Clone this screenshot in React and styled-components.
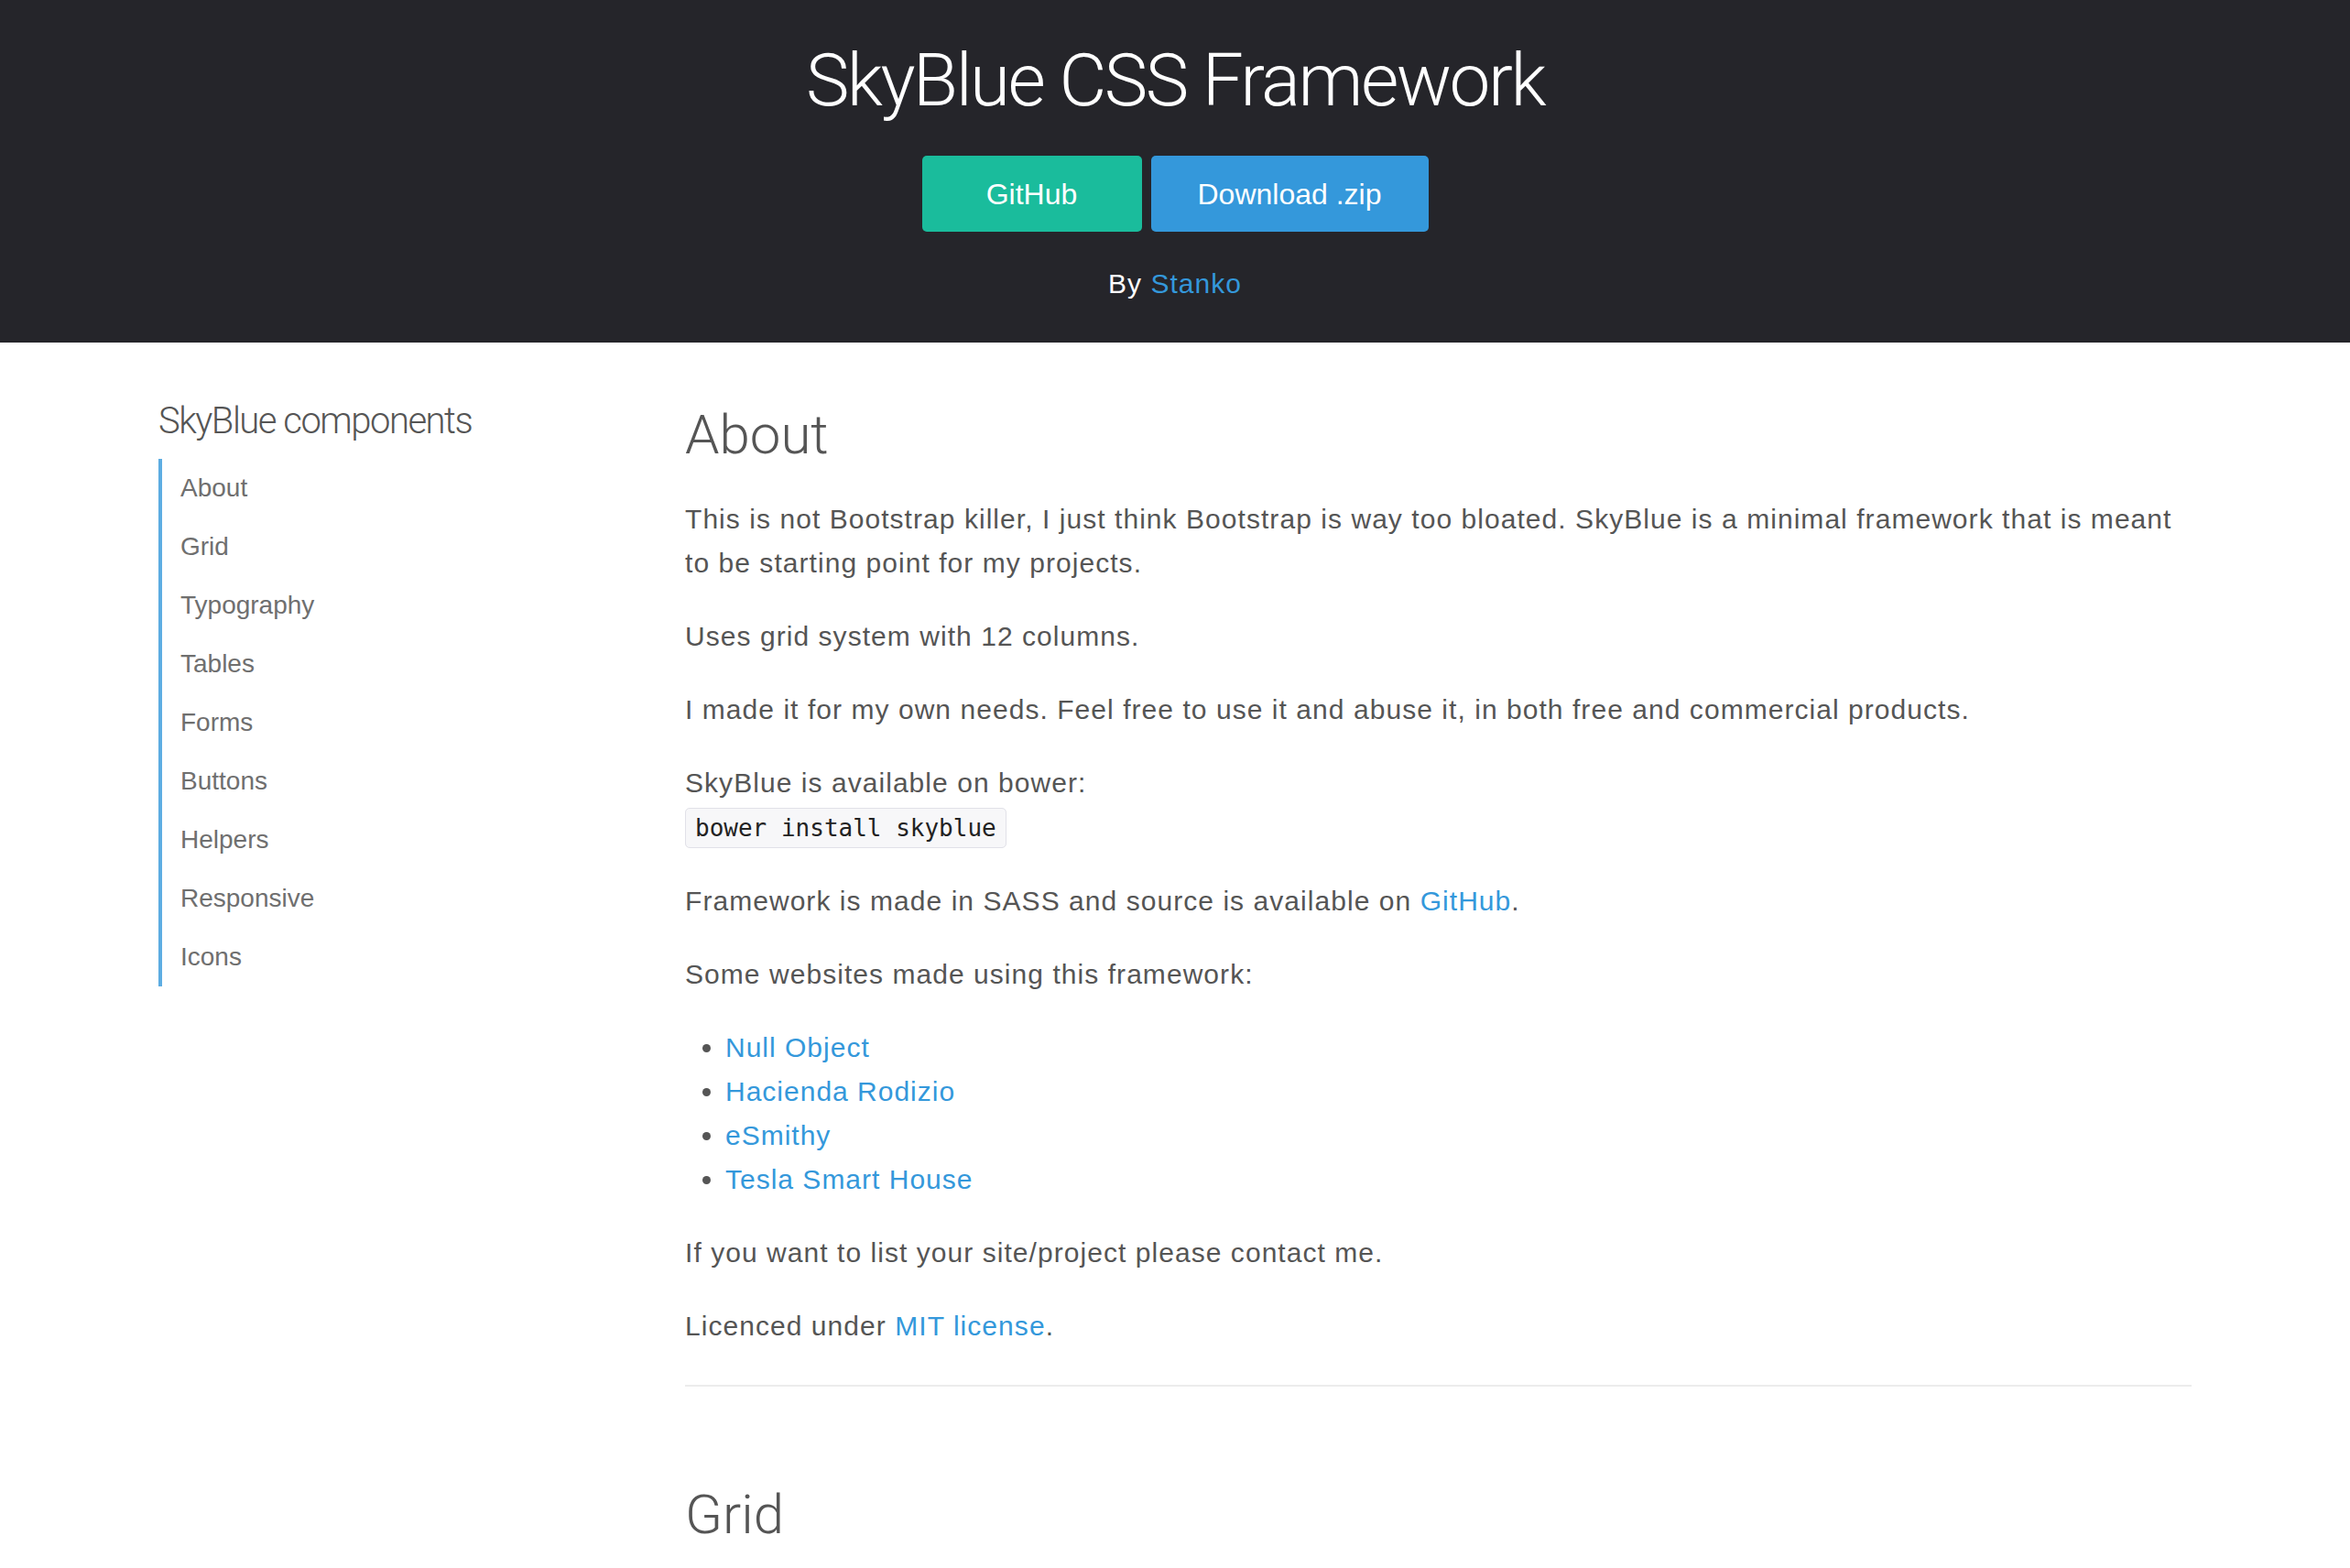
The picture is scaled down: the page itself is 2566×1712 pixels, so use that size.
import React from 'react';
import styled, { createGlobalStyle } from 'styled-components';

const GlobalStyle = createGlobalStyle`
	html, body {
		margin: 0;
		padding: 0;
		background: #fff;
	}
	body {
		font-family: 'Liberation Sans', Arial, sans-serif;
		font-size: 30px;
		line-height: 48px;
		color: #555;
	}
	a {
		color: #3498db;
		text-decoration: none;
	}
`;

const navItems = ['About', 'Grid', 'Typography', 'Tables', 'Forms', 'Buttons', 'Helpers', 'Responsive', 'Icons'];

const sites = ['Null Object', 'Hacienda Rodizio', 'eSmithy', 'Tesla Smart House'];

const Header = styled.header`
	background: #25252a;
	color: #fff;
	text-align: center;
	padding: 40px 0 40px;
`;

const Title = styled.h1`
	margin: 0;
	font-family: 'Roboto', 'Liberation Sans', sans-serif;
	font-weight: 300;
	font-size: 80px;
	line-height: 96px;
	letter-spacing: -2.5px;
`;

const ButtonRow = styled.div`
	display: flex;
	justify-content: center;
	gap: 10px;
	margin-top: 34px;
`;

const Button = styled.a`
	display: inline-flex;
	align-items: center;
	justify-content: center;
	height: 83px;
	min-width: 240px;
	box-sizing: border-box;
	padding: 0 51px;
	border-radius: 5px;
	font-size: 32px;
	color: #fff;
	background: ${(p) => (p.$variant === 'green' ? '#1abc9c' : '#3498db')};
`;

const Byline = styled.p`
	margin: 33px 0 0;
	font-size: 30px;
	letter-spacing: 1px;
`;

const Layout = styled.div`
	box-sizing: border-box;
	max-width: 2340px;
	margin: 0 auto;
	padding: 62px 60px 0;
	display: grid;
	grid-template-columns: 575px 1fr;
	align-items: start;
`;

const Sidebar = styled.aside``;

const SidebarTitle = styled.h3`
	margin: 0 0 17px;
	font-family: 'Roboto', 'Liberation Sans', sans-serif;
	font-weight: 300;
	font-size: 40px;
	line-height: 48px;
	letter-spacing: -1.5px;
	color: #555;
`;

const Nav = styled.ul`
	list-style: none;
	margin: 0;
	padding: 0 0 0 20px;
	border-left: 4px solid #5dade2;
`;

const NavLink = styled.a`
	display: block;
	font-size: 28px;
	line-height: 64px;
	color: #6f6f6f;
`;

const Main = styled.main``;

const SectionTitle = styled.h2`
	margin: 3px 0 32px;
	font-family: 'Roboto', 'Liberation Sans', sans-serif;
	font-weight: 300;
	font-size: 60px;
	line-height: 72px;
	color: #555;
`;

const Text = styled.p`
	margin: 0 0 32px;
	letter-spacing: 1.05px;
`;

const Code = styled.code`
	font-family: 'DejaVu Sans Mono', 'Liberation Mono', monospace;
	font-size: 26px;
	letter-spacing: 0;
	color: #222;
	background: #f7f7f9;
	border: 1px solid #e1e1e8;
	border-radius: 5px;
	padding: 6px 10px;
`;

const SiteList = styled.ul`
	margin: 0 0 32px;
	padding-left: 44px;
	letter-spacing: 1px;
`;

const Rule = styled.hr`
	border: 0;
	border-top: 2px solid #ececec;
	margin: 40px 0 104px;
`;

const App = () => {
	return (
		<>
			<GlobalStyle />
			<Header>
				<Title>SkyBlue CSS Framework</Title>
				<ButtonRow>
					<Button $variant="green" href="#">GitHub</Button>
					<Button $variant="blue" href="#">Download .zip</Button>
				</ButtonRow>
				<Byline>
					By <a href="#">Stanko</a>
				</Byline>
			</Header>
			<Layout>
				<Sidebar>
					<SidebarTitle>SkyBlue components</SidebarTitle>
					<Nav>
						{navItems.map((item) => (
							<li key={item}>
								<NavLink href="#">{item}</NavLink>
							</li>
						))}
					</Nav>
				</Sidebar>
				<Main>
					<section>
						<SectionTitle>About</SectionTitle>
						<Text>
							This is not Bootstrap killer, I just think Bootstrap is way too bloated. SkyBlue is a minimal
							framework that is meant to be starting point for my projects.
						</Text>
						<Text>Uses grid system with 12 columns.</Text>
						<Text>I made it for my own needs. Feel free to use it and abuse it, in both free and commercial products.</Text>
						<Text>
							SkyBlue is available on bower:
							<br />
							<Code>bower install skyblue</Code>
						</Text>
						<Text>
							Framework is made in SASS and source is available on <a href="#">GitHub</a>.
						</Text>
						<Text>Some websites made using this framework:</Text>
						<SiteList>
							{sites.map((site) => (
								<li key={site}>
									<a href="#">{site}</a>
								</li>
							))}
						</SiteList>
						<Text>If you want to list your site/project please contact me.</Text>
						<Text>
							Licenced under <a href="#">MIT license</a>.
						</Text>
					</section>
					<Rule />
					<section>
						<SectionTitle>Grid</SectionTitle>
					</section>
				</Main>
			</Layout>
		</>
	);
};

export default App;
